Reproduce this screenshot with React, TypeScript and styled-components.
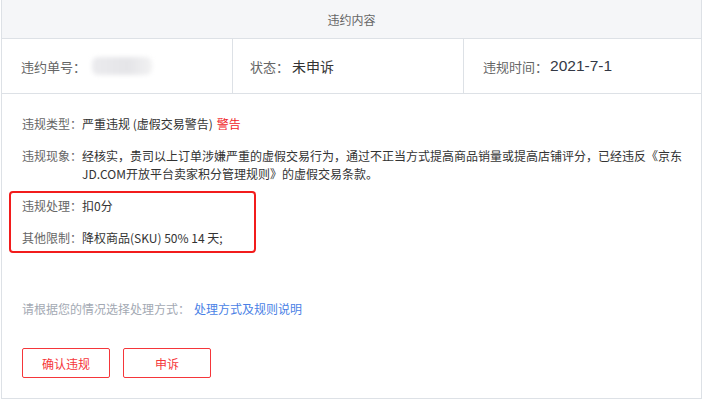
import React from "react";
import styled, { createGlobalStyle } from "styled-components";

const Global = createGlobalStyle`
  html, body { margin: 0; padding: 0; background: #ffffff; }
  body {
    font-family: "Noto Sans CJK SC", "Noto Sans", "Liberation Sans", sans-serif;
    -webkit-font-smoothing: antialiased;
  }
`;

const Panel = styled.div`
  margin-left: 1px;
  width: 701px;
  box-sizing: border-box;
  border: 1px solid #dde1e6;
  border-top: none;
  background: #fff;
`;

const Header = styled.div`
  height: 38px;
  background: #f5f6f8;
  border-bottom: 1px solid #dde1e6;
  display: flex;
  align-items: center;
  justify-content: center;
  font-size: 12px;
  color: #666;
`;

const InfoRow = styled.div`
  display: grid;
  grid-template-columns: 231px 231px 1fr;
  height: 54px;
  border-bottom: 1px solid #dde1e6;
`;

const InfoCell = styled.div<{ $pad: number; $last?: boolean }>`
  display: flex;
  align-items: center;
  padding-left: ${(p) => p.$pad}px;
  border-right: ${(p) => (p.$last ? "none" : "1px solid #dde1e6")};
  font-size: 13px;
  color: #666;
`;

const InfoValue = styled.span<{ $size: number }>`
  font-size: ${(p) => p.$size}px;
  color: #333;
  margin-left: 3px;
`;

const DateValue = styled.span`
  font-family: "Liberation Sans", "Noto Sans CJK SC", sans-serif;
  font-size: 15.5px;
  color: #333845;
  margin-left: 2px;
`;

const Blurred = styled.span`
  display: inline-block;
  width: 60px;
  height: 18px;
  margin-left: 6px;
  background: linear-gradient(90deg, #ebebee 0%, #e5e5e8 60%, #f2f2f3 100%);
  filter: blur(2px);
  border-radius: 6px;
`;

const Body = styled.div`
  padding: 21px 10px 20px 20px;
  font-size: 12px;
  line-height: 18px;
`;

const Line = styled.div<{ $mb?: number }>`
  display: flex;
  margin-bottom: ${(p) => (p.$mb ?? 14)}px;
`;

const Label = styled.span`
  flex: none;
  color: #666;
`;

const Value = styled.span`
  color: #333;
`;

const Warn = styled.span`
  color: #f0242a;
  margin-left: 4px;
`;

const HighlightBox = styled.div`
  margin: 8px 0 0 -13px;
  width: 247px;
  box-sizing: border-box;
  border: 2px solid #f21c1c;
  border-radius: 4px;
  padding: 4px 0 4px 11px;
`;

const Hint = styled.div`
  margin-top: 47px;
  color: #a3a9b3;
`;

const Link = styled.a`
  color: #4a7fe6;
  text-decoration: none;
  margin-left: 4px;
`;

const Buttons = styled.div`
  display: flex;
  gap: 13px;
  margin-top: 30px;
`;

const Btn = styled.button`
  width: 88px;
  height: 30px;
  box-sizing: border-box;
  border: 1px solid #f5363a;
  border-radius: 2px;
  background: #fff;
  color: #f5363a;
  font-family: inherit;
  font-size: 12px;
  padding: 0;
`;

export default function App() {
  return (
    <>
      <Global />
      <Panel>
        <Header>违约内容</Header>
        <InfoRow>
          <InfoCell $pad={19}>
            违约单号：
            <Blurred />
          </InfoCell>
          <InfoCell $pad={17}>
            状态：<InfoValue $size={14}>未申诉</InfoValue>
          </InfoCell>
          <InfoCell $pad={19} $last>
            违规时间：<DateValue>2021-7-1</DateValue>
          </InfoCell>
        </InfoRow>
        <Body>
          <Line>
            <Label>违规类型：</Label>
            <Value>
              严重违规 (虚假交易警告)<Warn>警告</Warn>
            </Value>
          </Line>
          <Line $mb={0}>
            <Label>违规现象：</Label>
            <Value>
              经核实，贵司以上订单涉嫌严重的虚假交易行为，通过不正当方式提高商品销量或提高店铺评分，已经违反《京东JD.COM开放平台卖家积分管理规则》的虚假交易条款。
            </Value>
          </Line>
          <HighlightBox>
            <Line>
              <Label>违规处理：</Label>
              <Value>扣0分</Value>
            </Line>
            <Line $mb={0}>
              <Label>其他限制：</Label>
              <Value>降权商品(SKU) 50% 14 天;</Value>
            </Line>
          </HighlightBox>
          <Hint>
            请根据您的情况选择处理方式：<Link href="#">处理方式及规则说明</Link>
          </Hint>
          <Buttons>
            <Btn>确认违规</Btn>
            <Btn>申诉</Btn>
          </Buttons>
        </Body>
      </Panel>
    </>
  );
}
